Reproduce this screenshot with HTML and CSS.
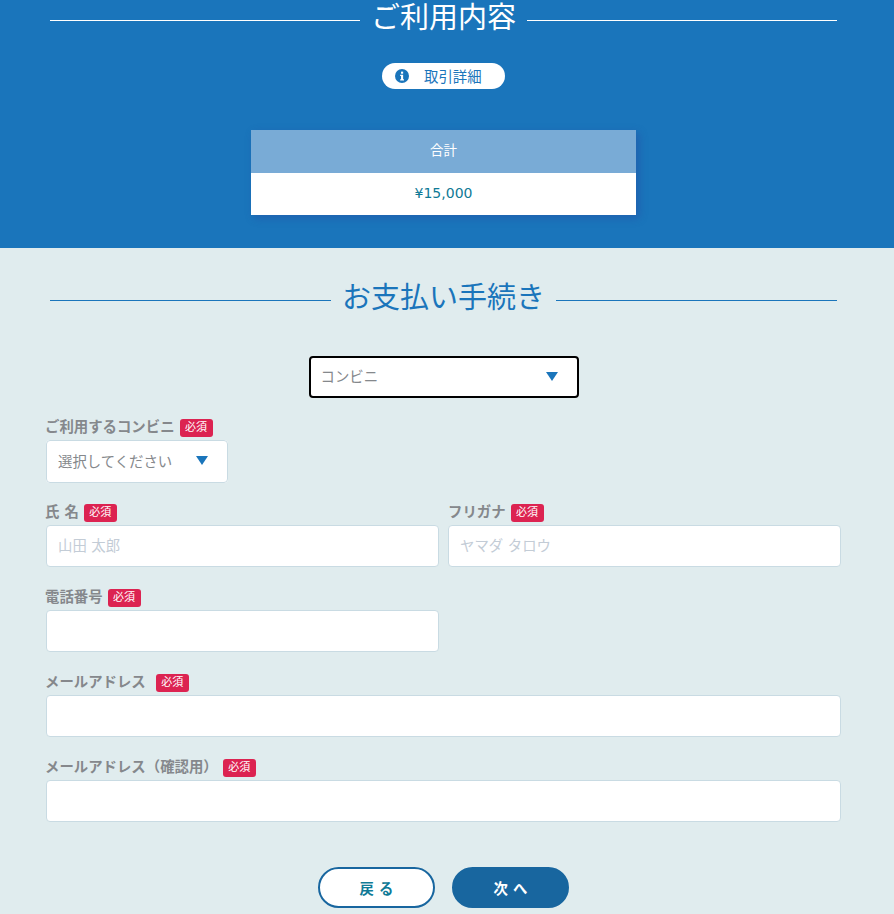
FILE: index.html
```html
<!DOCTYPE html>
<html lang="ja">
<head>
    <meta charset="UTF-8">
    <meta name="viewport" content="width=device-width, initial-scale=1.0">
    <title>お支払い手続き</title>
    <link rel="stylesheet" href="styles.css">
</head>
<body>
    <section class="summary">
        <h2 class="section-title">ご利用内容</h2>
        <a class="detail-btn" href="#">
            <svg class="info-icon" viewBox="0 0 16 16" width="14" height="14">
                <circle cx="8" cy="8" r="8" fill="#1a75bb"/>
                <rect x="6.9" y="3" width="2.4" height="2.4" fill="#fff"/>
                <path d="M5.9 6.7h3.4v5h1v1.4H5.9v-1.4h1v-3.6h-1z" fill="#fff"/>
            </svg>
            <span>取引詳細</span>
        </a>
        <div class="total">
            <div class="total-head">合計</div>
            <div class="total-body">¥15,000</div>
        </div>
    </section>

    <section class="payment">
        <h2 class="section-title">お支払い手続き</h2>

        <div class="method-row">
            <div class="select-wrap method">
                <select>
                    <option>コンビニ</option>
                </select>
            </div>
        </div>

        <form class="form">
            <div class="field full">
                <label>ご利用するコンビニ <span class="badge">必須</span></label>
                <div class="select-wrap store">
                    <select>
                        <option>選択してください</option>
                    </select>
                </div>
            </div>
            <div class="field">
                <label>氏 名 <span class="badge">必須</span></label>
                <input type="text" placeholder="山田 太郎">
            </div>
            <div class="field kana">
                <label>フリガナ <span class="badge">必須</span></label>
                <input type="text" placeholder="ヤマダ タロウ">
            </div>
            <div class="field">
                <label>電話番号 <span class="badge">必須</span></label>
                <input type="text">
            </div>
            <div class="field full">
                <label class="wide">メールアドレス <span class="badge">必須</span></label>
                <input type="text">
            </div>
            <div class="field full">
                <label>メールアドレス（確認用） <span class="badge">必須</span></label>
                <input type="text">
            </div>
        </form>

        <div class="buttons">
            <button class="btn btn-back" type="button">戻 る</button>
            <button class="btn btn-next" type="button">次 へ</button>
        </div>
    </section>
</body>
</html>
```

FILE: styles.css
```css
* {
    box-sizing: border-box;
}

body {
    margin: 0;
    font-family: "DejaVu Sans", "Noto Sans CJK JP", sans-serif;
    font-size: 14.4px;
    background-color: #e0ecee;
}

.section-title {
    display: flex;
    align-items: center;
    gap: 11px;
    margin: 0 50px;
    width: 787px;
    height: 36px;
    font-size: 29px;
    font-weight: normal;
    line-height: 36px;
    white-space: nowrap;
}

.section-title::before,
.section-title::after {
    content: "";
    flex: 1;
    border-top: 1px solid currentColor;
    margin-top: 5px;
}

/* top blue part */
.summary {
    height: 248px;
    padding-right: 7px;
    background-color: #1a75bb;
    color: #fff;
    display: flex;
    flex-direction: column;
    align-items: center;
}

.summary .section-title {
    align-self: flex-start;
}

.detail-btn {
    display: flex;
    align-items: center;
    width: 123px;
    height: 26px;
    margin-top: 27px;
    padding-left: 13px;
    gap: 15px;
    border-radius: 13px;
    background-color: #fff;
    color: #1a75bb;
    font-size: 14.4px;
    text-decoration: none;
}

.detail-btn span {
    padding-bottom: 2px;
}

.info-icon {
    flex-shrink: 0;
}

.total {
    width: 385px;
    margin-top: 41px;
    text-align: center;
    box-shadow: 3px 3px 8px rgba(40, 70, 160, 0.45);
}

.total-head {
    height: 43px;
    line-height: 41px;
    background-color: #79abd6;
    font-size: 13.5px;
}

.total-body {
    height: 42px;
    line-height: 41px;
    background-color: #fff;
    color: #0f7a96;
    font-size: 14px;
}

/* form part */
.payment {
    height: 666px;
    padding-top: 32px;
    padding-right: 7px;
    overflow: hidden;
    color: #1a75bb;
}

.method-row {
    display: flex;
    justify-content: center;
    margin-top: 40px;
}

.select-wrap {
    position: relative;
    border-radius: 4px;
    background-color: #fff;
}

.select-wrap::after {
    content: "";
    position: absolute;
    top: 50%;
    width: 0;
    height: 0;
    margin-top: -5px;
    border-left: 6.5px solid transparent;
    border-right: 6.5px solid transparent;
    border-top: 9px solid #1a75bb;
    pointer-events: none;
}

.select-wrap select {
    width: 100%;
    height: 100%;
    appearance: none;
    background: transparent;
    font-family: inherit;
    font-size: 14.4px;
    color: #85888c;
    outline: none;
}

.method {
    width: 270px;
    height: 42px;
}

.method::after {
    right: 21px;
}

.method select {
    padding-left: 10px;
    border: 2px solid #000;
    border-radius: 4px;
}

.store {
    width: 182px;
    height: 42.6px;
}

.store::after {
    right: 20px;
}

.store select {
    padding: 1px 0 0 11px;
    border: 1px solid #c9dbe3;
    border-radius: 4px;
}

.form {
    display: grid;
    grid-template-columns: 393px 393px;
    column-gap: 9px;
    row-gap: 20.5px;
    margin: 20px 0 0 46px;
    width: 795px;
}

.field.full {
    grid-column: 1 / 3;
}

.field label {
    display: flex;
    align-items: flex-start;
    gap: 5px;
    height: 22px;
    padding-top: 1px;
    margin-left: -1px;
    color: #85888c;
    font-weight: bold;
    line-height: 16px;
    white-space: nowrap;
}

.field.kana label {
    margin-left: 0;
}

.field label.wide {
    gap: 10px;
}

.badge {
    display: block;
    width: 33px;
    height: 18px;
    line-height: 17px;
    border-radius: 3px;
    background-color: #dc2351;
    color: #fff;
    font-size: 11px;
    font-weight: normal;
    text-align: center;
}

.field input {
    display: block;
    width: 100%;
    height: 42.4px;
    padding: 0 11px;
    border: 1px solid #c9dbe3;
    border-radius: 4px;
    background-color: #fff;
    font-family: inherit;
    font-size: 14.4px;
}

.field input::placeholder {
    color: #c3ccd6;
}

.buttons {
    display: flex;
    justify-content: center;
    gap: 17px;
    margin-top: 44.8px;
}

.btn {
    width: 117px;
    height: 41px;
    border-radius: 21px;
    border: 2px solid #18669f;
    font-family: inherit;
    font-size: 14.4px;
    font-weight: bold;
}

.btn-back {
    background-color: #fff;
    color: #0f7a96;
}

.btn-next {
    background-color: #18669f;
    color: #fff;
}
```
